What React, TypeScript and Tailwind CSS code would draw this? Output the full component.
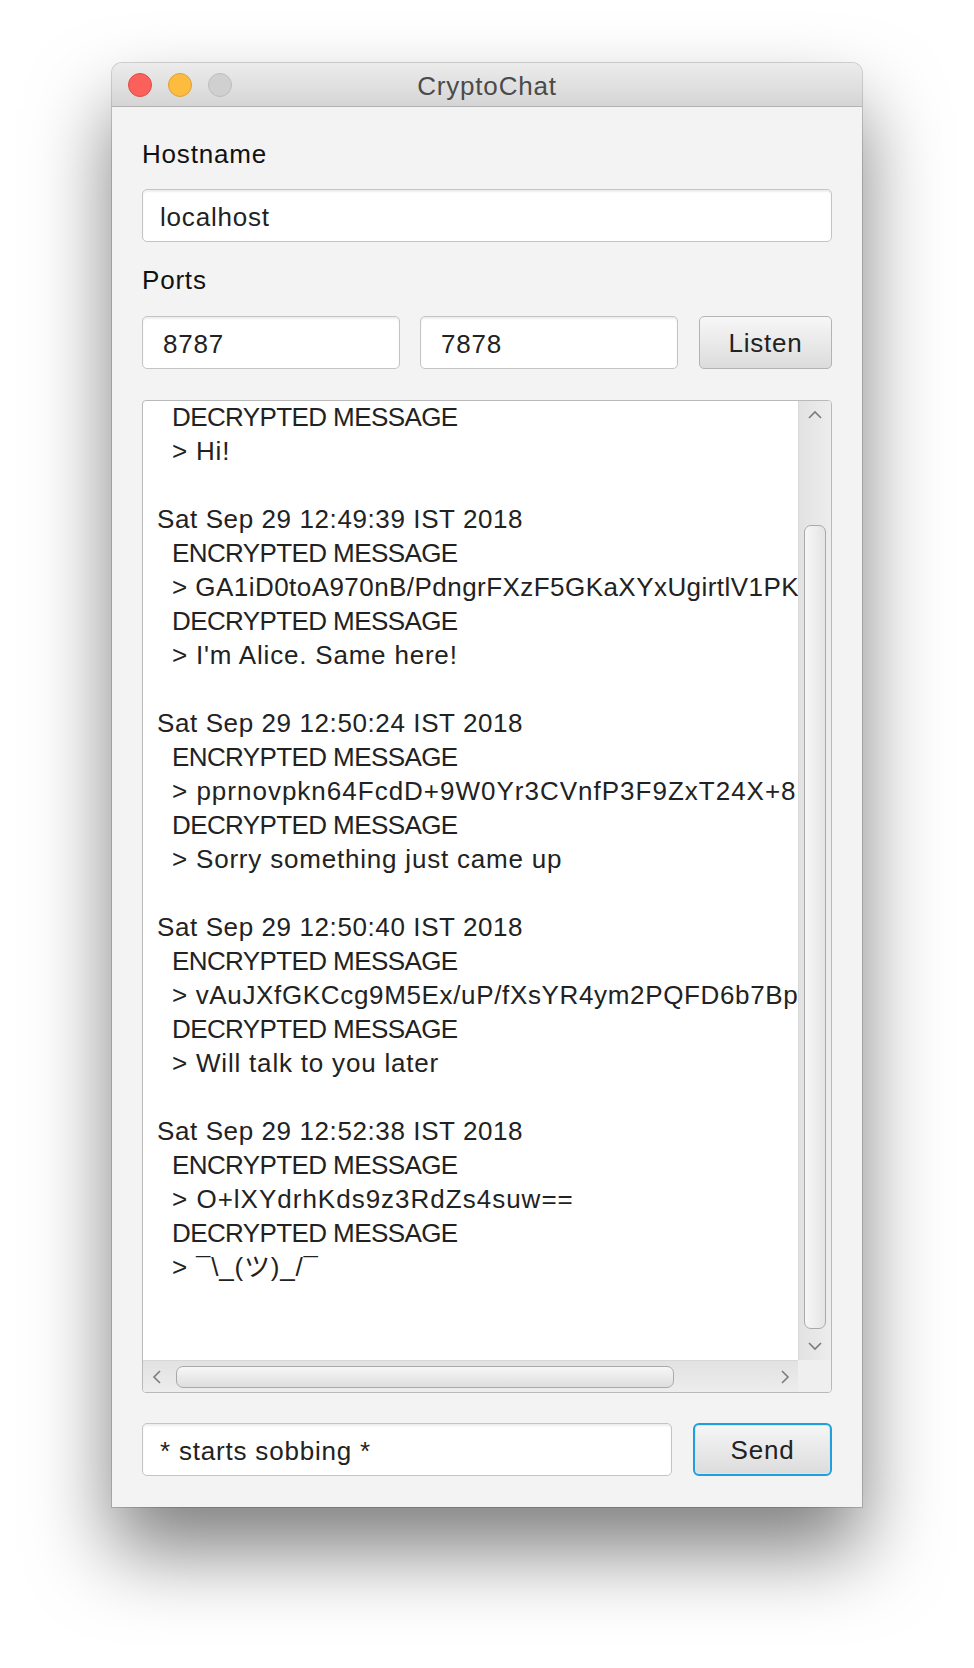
import React from "react";

type Kind = "date" | "caps" | "cipher" | "plain" | "blank";
type Line = { text: string; kind: Kind; track?: string };

const log: Line[] = [
  { text: "DECRYPTED MESSAGE", kind: "caps" },
  { text: "> Hi!", kind: "plain" },
  { text: "", kind: "blank" },
  { text: "Sat Sep 29 12:49:39 IST 2018", kind: "date" },
  { text: "ENCRYPTED MESSAGE", kind: "caps" },
  { text: "> GA1iD0toA970nB/PdngrFXzF5GKaXYxUgirtlV1PK", kind: "cipher", track: "tracking-[0.45px]" },
  { text: "DECRYPTED MESSAGE", kind: "caps" },
  { text: "> I'm Alice. Same here!", kind: "plain" },
  { text: "", kind: "blank" },
  { text: "Sat Sep 29 12:50:24 IST 2018", kind: "date" },
  { text: "ENCRYPTED MESSAGE", kind: "caps" },
  { text: "> pprnovpkn64FcdD+9W0Yr3CVnfP3F9ZxT24X+8", kind: "cipher", track: "tracking-[1px]" },
  { text: "DECRYPTED MESSAGE", kind: "caps" },
  { text: "> Sorry something just came up", kind: "plain" },
  { text: "", kind: "blank" },
  { text: "Sat Sep 29 12:50:40 IST 2018", kind: "date" },
  { text: "ENCRYPTED MESSAGE", kind: "caps" },
  { text: "> vAuJXfGKCcg9M5Ex/uP/fXsYR4ym2PQFD6b7Bp", kind: "cipher", track: "tracking-[0.65px]" },
  { text: "DECRYPTED MESSAGE", kind: "caps" },
  { text: "> Will talk to you later", kind: "plain" },
  { text: "", kind: "blank" },
  { text: "Sat Sep 29 12:52:38 IST 2018", kind: "date" },
  { text: "ENCRYPTED MESSAGE", kind: "caps" },
  { text: "> O+lXYdrhKds9z3RdZs4suw==", kind: "cipher", track: "tracking-[1px]" },
  { text: "DECRYPTED MESSAGE", kind: "caps" },
  { text: "> ¯\\_(ツ)_/¯", kind: "plain" },
];

const kindClass: Record<Kind, string> = {
  date: "tracking-[0.6px]",
  caps: "pl-[15px] tracking-[-0.6px]",
  cipher: "pl-[15px]",
  plain: "pl-[15px] tracking-[0.8px]",
  blank: "",
};

function Chevron({ dir }: { dir: "up" | "down" | "left" | "right" }) {
  const pts = {
    up: "1,8 7,2 13,8",
    down: "1,2 7,8 13,2",
    left: "8,1 2,7 8,13",
    right: "2,1 8,7 2,13",
  }[dir];
  const vertical = dir === "up" || dir === "down";
  return (
    <svg
      width={vertical ? 14 : 10}
      height={vertical ? 10 : 14}
      viewBox={vertical ? "0 0 14 10" : "0 0 10 14"}
    >
      <polyline points={pts} fill="none" stroke="#7b7b7b" strokeWidth="1.6" />
    </svg>
  );
}

function Field({ value, className = "" }: { value: string; className?: string }) {
  return (
    <div
      className={`h-[53px] flex items-center pl-[17px] pt-[3px] bg-white rounded-[5px] border border-[#c4c4c4] shadow-[inset_0_2px_2px_rgba(0,0,0,0.07)] text-[26px] tracking-[0.8px] text-[#222] ${className}`}
    >
      {value}
    </div>
  );
}

export default function App() {
  return (
    <div
      className="min-h-[1668px] bg-white flex justify-center pt-[63px]"
      style={{ fontFamily: '"Liberation Sans", "Noto Sans CJK JP", sans-serif' }}
    >
      <div className="w-[750px] h-[1444px] flex flex-col bg-[#f3f3f3] rounded-t-[10px] overflow-hidden shadow-[0_44px_80px_rgba(0,0,0,0.5),0_0_0_1px_rgba(0,0,0,0.16)]">
        {/* title bar */}
        <div className="h-[44px] shrink-0 grid grid-cols-[1fr_auto_1fr] items-center bg-gradient-to-b from-[#ececec] to-[#d5d5d5] border-b border-[#b3b3b3]">
          <div className="flex items-center gap-[16px] pl-[16px]">
            <span className="w-[24px] h-[24px] rounded-full bg-[#fc605b] border border-[#dd4c47]" />
            <span className="w-[24px] h-[24px] rounded-full bg-[#fdbc40] border border-[#dca136]" />
            <span className="w-[24px] h-[24px] rounded-full bg-[#d0d0d0] border border-[#bcbcbc]" />
          </div>
          <div className="text-[26px] tracking-[0.8px] text-[#4b4b4b] leading-none pt-[2px]">CryptoChat</div>
          <div />
        </div>

        {/* body */}
        <div className="flex flex-col px-[30px] pt-[30px]">
          <div className="h-[34px] leading-[34px] text-[26px] tracking-[0.8px] text-[#111]">Hostname</div>
          <Field value="localhost" className="mt-[18px]" />

          <div className="mt-[21px] h-[34px] leading-[34px] text-[26px] tracking-[0.8px] text-[#111]">Ports</div>
          <div className="mt-[19px] flex gap-[20px]">
            <Field value="8787" className="w-[258px] pl-[20px]" />
            <Field value="7878" className="w-[258px] pl-[20px]" />
            <button className="flex-1 ml-[1px] h-[53px] pt-[2px] rounded-[5px] border border-[#b3b3b3] bg-gradient-to-b from-[#f7f7f7] to-[#dcdcdc] text-[26px] tracking-[0.8px] text-[#222]">
              Listen
            </button>
          </div>

          {/* log area */}
          <div className="mt-[31px] h-[993px] grid grid-cols-[1fr_33px] grid-rows-[1fr_32px] bg-white border border-[#b9b9b9] rounded-[4px] overflow-hidden">
            <div className="overflow-hidden">
              <div className="-mt-[1px] pl-[14px] text-[26px] leading-[34px] text-[#222] whitespace-pre">
                {log.map((l, i) => (
                  <div key={i} className={`h-[34px] ${kindClass[l.kind]} ${l.track ?? ""}`}>
                    {l.text}
                  </div>
                ))}
              </div>
            </div>

            {/* vertical scrollbar */}
            <div className="flex flex-col bg-gradient-to-r from-[#e2e2e2] to-[#ededed] border-l border-[#d8d8d8]">
              <div className="h-[28px] flex items-center justify-center">
                <Chevron dir="up" />
              </div>
              <div className="flex-1 pt-[96px] flex justify-center">
                <div className="w-[22px] h-[804px] rounded-[7px] border-[1.5px] border-[#a9a9a9] bg-gradient-to-r from-[#f7f7f7] to-[#e4e4e4]" />
              </div>
              <div className="h-[28px] flex items-center justify-center">
                <Chevron dir="down" />
              </div>
            </div>

            {/* horizontal scrollbar */}
            <div className="flex items-center bg-gradient-to-b from-[#e2e2e2] to-[#ededed] border-t border-[#d8d8d8]">
              <div className="w-[27px] flex justify-center">
                <Chevron dir="left" />
              </div>
              <div className="ml-[6px] w-[498px] h-[22px] rounded-[7px] border-[1.5px] border-[#a9a9a9] bg-gradient-to-b from-[#f7f7f7] to-[#dedede]" />
              <div className="flex-1" />
              <div className="w-[27px] flex justify-center">
                <Chevron dir="right" />
              </div>
            </div>
            <div className="bg-[#efefef]" />
          </div>

          {/* send row */}
          <div className="mt-[30px] flex gap-[21px]">
            <Field value="* starts sobbing *" className="flex-1" />
            <button className="w-[139px] h-[53px] pt-[2px] rounded-[6px] border-2 border-[#1f9fdc] shadow-[inset_0_0_0_1px_#d4e8f2] bg-gradient-to-b from-[#f6f6f6] to-[#dcdcdc] text-[26px] tracking-[0.8px] text-[#222]">
              Send
            </button>
          </div>
        </div>
      </div>
    </div>
  );
}
